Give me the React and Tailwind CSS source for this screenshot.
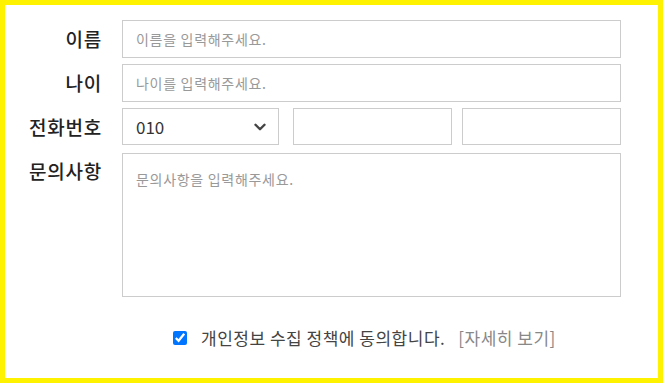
import { ChevronDown } from "lucide-react"

const font = { fontFamily: '"Noto Sans CJK KR", "Noto Sans", sans-serif' }

function Label({ children }) {
  return (
    <div className="h-[38px] flex items-center justify-end text-[19px] tracking-[0.04em] font-medium text-[#222]">
      {children}
    </div>
  )
}

const field =
  "border border-[#ccc] px-[13px] text-[14px] tracking-[0.05em] placeholder:text-[#999] outline-none"

export default function App() {
  return (
    <div className="w-[663px] h-[383px] border-[5px] border-[#fff200] bg-white" style={font}>
      <div className="grid grid-cols-[97px_499px] gap-x-5 gap-y-[6px] pt-[15px]">
        <Label>이름</Label>
        <input className={`h-[38px] ${field}`} placeholder="이름을 입력해주세요." />

        <Label>나이</Label>
        <input className={`h-[38px] ${field}`} placeholder="나이를 입력해주세요." />

        <Label>전화번호</Label>
        <div className="flex h-[37px]">
          <div className="w-[157px] border border-[#ccc] flex items-center justify-between pl-[13px] pr-[9px] text-[17px] text-[#333]">
            <span>010</span>
            <ChevronDown className="w-[18px] h-[18px] text-[#444]" strokeWidth={3.2} />
          </div>
          <input className="ml-[14px] w-[159px] border border-[#ccc] outline-none" />
          <input className="ml-[10px] w-[159px] border border-[#ccc] outline-none" />
        </div>

        <Label>문의사항</Label>
        <textarea
          className={`mt-[1px] h-[144px] py-[15px] resize-none ${field}`}
          placeholder="문의사항을 입력해주세요."
        />

        <div />
        <div className="flex items-center pl-[51px] pt-[22px] text-[17px] tracking-[0.03em]">
          <input type="checkbox" defaultChecked className="w-[14px] h-[14px] accent-[#0075ff]" />
          <span className="ml-[14px] text-[#444]">개인정보 수집 정책에 동의합니다.</span>
          <span className="ml-[13px] text-[#888]">[자세히 보기]</span>
        </div>
      </div>
    </div>
  )
}
